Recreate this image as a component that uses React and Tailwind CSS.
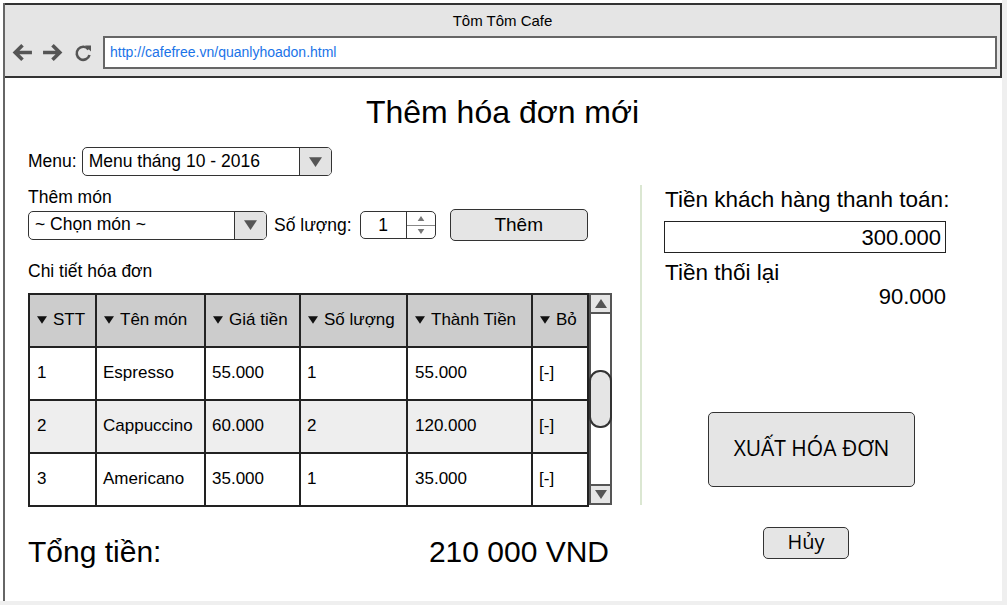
const items = [
  { stt: '1', ten: 'Espresso', gia: '55.000', sl: '1', thanh: '55.000' },
  { stt: '2', ten: 'Cappuccino', gia: '60.000', sl: '2', thanh: '120.000' },
  { stt: '3', ten: 'Americano', gia: '35.000', sl: '1', thanh: '35.000' },
]

const columns = [
  { name: 'STT', w: 'w-[67px]' },
  { name: 'Tên món', w: 'w-[109px]' },
  { name: 'Giá tiền', w: 'w-[95px]' },
  { name: 'Số lượng', w: 'w-[107px]' },
  { name: 'Thành Tiền', w: 'w-[125px]' },
  { name: 'Bỏ', w: 'w-[56px]' },
]

function Caret({ className = 'w-[12px] h-[9px]', color = '#444' }) {
  return (
    <svg className={className} viewBox="0 0 12 9" aria-hidden="true">
      <path d="M0 0h12L6 9z" fill={color} />
    </svg>
  )
}

function Select({ value, width }) {
  return (
    <div className={`${width} h-[29px] flex border border-[#333] rounded-[5px] overflow-hidden bg-white`}>
      <div className="flex-1 pl-[6px] flex items-center text-[17.5px] leading-none">{value}</div>
      <div className="w-[32px] border-l border-[#333] bg-[#e3e3e3] flex items-center justify-center">
        <Caret className="w-[13px] h-[10px]" color="#555" />
      </div>
    </div>
  )
}

export default function App() {
  return (
    <div className="w-[1007px] h-[605px] bg-[#efefef] font-['Liberation_Sans',Arial,sans-serif] text-black">
      <div className="w-[1002px] h-[601px] bg-white pt-[3px] pl-[3px]">
        <div className="h-full border-l-2 border-[#666] flex flex-col">
          {/* browser bar */}
          <div className="h-[75px] bg-[#e5e5e5] border-t-2 border-b-2 border-r-2 border-[#333] flex flex-col">
            <div className="pt-[7px] text-center text-[15px] leading-[18px]">Tôm Tôm Cafe</div>
            <div className="mt-[6px] flex items-center pl-[7px]">
              <svg className="w-[21px] h-[21px]" viewBox="0 0 20 20" aria-hidden="true">
                <path d="M19 10H3M10 3l-7 7 7 7" fill="none" stroke="#555" strokeWidth="3.4" />
              </svg>
              <svg className="w-[21px] h-[21px] ml-[9px]" viewBox="0 0 20 20" aria-hidden="true">
                <path d="M1 10h16M10 3l7 7-7 7" fill="none" stroke="#555" strokeWidth="3.4" />
              </svg>
              <svg className="w-[18px] h-[18px] ml-[11px]" viewBox="0 0 18 18" aria-hidden="true">
                <path d="M14.5 5.5A6.5 6.5 0 1 0 15.5 11" fill="none" stroke="#555" strokeWidth="2.6" />
                <path d="M11 1.5h6v6z" fill="#555" />
              </svg>
              <div className="ml-[11px] w-[894px] h-[33px] bg-white border-2 border-[#666] flex items-center pl-[5px] text-[14px] text-[#1a73e8]">
                http://cafefree.vn/quanlyhoadon.html
              </div>
            </div>
          </div>

          {/* content */}
          <div className="flex-1 pl-[23px]">
            <h1 className="pt-[16px] text-center text-[32px] leading-[37px] pr-[25px]">Thêm hóa đơn mới</h1>

            <div className="mt-[16px] flex items-center gap-[5px] text-[17.5px]">
              <span>Menu:</span>
              <Select value="Menu tháng 10 - 2016" width="w-[250px]" />
            </div>

            <div className="mt-[9px] flex">
              {/* left column */}
              <div className="w-[584px] text-[17.5px]">
                <div className="pt-[2px] leading-[20px]">Thêm món</div>
                <div className="mt-[2px] h-[32px] flex items-center">
                  <Select value="~ Chọn món ~" width="w-[239px]" />
                  <span className="ml-[7px]">Số lượng:</span>
                  <div className="ml-[8px] w-[76px] h-[28px] flex border border-[#333] rounded-[5px] overflow-hidden">
                    <div className="flex-1 flex items-center justify-center">1</div>
                    <div className="w-[29px] border-l border-[#333] flex flex-col">
                      <div className="flex-1 flex items-center justify-center border-b border-[#888]">
                        <Caret className="w-[8px] h-[5px] rotate-180" color="#777" />
                      </div>
                      <div className="flex-1 flex items-center justify-center">
                        <Caret className="w-[8px] h-[5px]" color="#777" />
                      </div>
                    </div>
                  </div>
                  <button className="ml-[14px] w-[138px] h-[32px] bg-[#e5e5e5] border border-[#333] rounded-[5px] text-[19px] leading-none pb-[2px]">
                    Thêm
                  </button>
                </div>

                <div className="mt-[20px] leading-[20px]">Chi tiết hóa đơn</div>

                <div className="mt-[12px] flex">
                  <table className="w-[559px] h-[212px] border-collapse table-fixed text-[17px]">
                    <thead>
                      <tr className="h-[53px] bg-[#cccccc]">
                        {columns.map((c) => (
                          <th key={c.name} className={`${c.w} border-2 border-[#222] pl-[7px] pb-[2px] text-left font-normal whitespace-nowrap`}>
                            <span className="inline-flex items-center gap-[6px]">
                              <Caret className="w-[10px] h-[8px]" color="#111" />
                              {c.name}
                            </span>
                          </th>
                        ))}
                      </tr>
                    </thead>
                    <tbody>
                      {items.map((it, i) => (
                        <tr key={it.stt} className={i === 1 ? 'h-[53px] bg-[#eeeeee]' : 'h-[53px] bg-white'}>
                          <td className="border-2 border-[#222] pl-[7px] pb-[2px]">{it.stt}</td>
                          <td className="border-2 border-[#222] pl-[6px] pb-[2px]">{it.ten}</td>
                          <td className="border-2 border-[#222] pl-[6px] pb-[2px]">{it.gia}</td>
                          <td className="border-2 border-[#222] pl-[6px] pb-[2px]">{it.sl}</td>
                          <td className="border-2 border-[#222] pl-[7px] pb-[2px]">{it.thanh}</td>
                          <td className="border-2 border-[#222] pl-[6px] pb-[2px]">[-]</td>
                        </tr>
                      ))}
                    </tbody>
                  </table>
                  <div className="w-[23px] h-[212px] border-2 border-[#555] flex flex-col bg-white">
                    <div className="h-[19px] bg-[#e5e5e5] border-b-2 border-[#555] flex items-center justify-center">
                      <Caret className="w-[12px] h-[9px] rotate-180" color="#555" />
                    </div>
                    <div className="flex-1 pt-[56px]">
                      <div className="-mx-[2px] h-[58px] bg-[#e5e5e5] border-2 border-[#333] rounded-[11px]" />
                    </div>
                    <div className="h-[19px] bg-[#e5e5e5] border-t-2 border-[#555] flex items-center justify-center">
                      <Caret className="w-[12px] h-[9px]" color="#555" />
                    </div>
                  </div>
                </div>

                <div className="mt-[28px] flex justify-between text-[30px] leading-[34px]">
                  <span>Tổng tiền:</span>
                  <span className="pr-[3px]">210 000 VND</span>
                </div>
              </div>

              {/* right column */}
              <div className="ml-[28px] flex flex-col">
                <div className="h-[320px] border-l-2 border-[#dbe7d2] pl-[23px]">
                  <div className="pt-[2px] text-[22.5px] leading-[26px] whitespace-nowrap">Tiền khách hàng thanh toán:</div>
                  <div className="mt-[8px] -ml-[1px] w-[282px] h-[32px] border border-[#222] flex items-center justify-end pr-[4px] text-[22px]">
                    300.000
                  </div>
                  <div className="mt-[7px] text-[22.5px] leading-[26px]">Tiền thối lại</div>
                  <div className="-mt-[1px] w-[281px] text-right text-[22px] leading-[24px]">90.000</div>
                  <button className="mt-[103px] ml-[43px] w-[207px] h-[75px] bg-[#e5e5e5] border border-[#333] rounded-[5px] text-[21px] font-['Open_Sans',sans-serif] pb-[2px]">
                    XUẤT HÓA ĐƠN
                  </button>
                </div>
                <button className="mt-[22px] ml-[123px] w-[86px] h-[32px] bg-[#e5e5e5] border border-[#333] rounded-[5px] text-[20px] font-['Open_Sans',sans-serif] leading-none pb-[2px]">
                  Hủy
                </button>
              </div>
            </div>
          </div>
        </div>
      </div>
    </div>
  )
}
